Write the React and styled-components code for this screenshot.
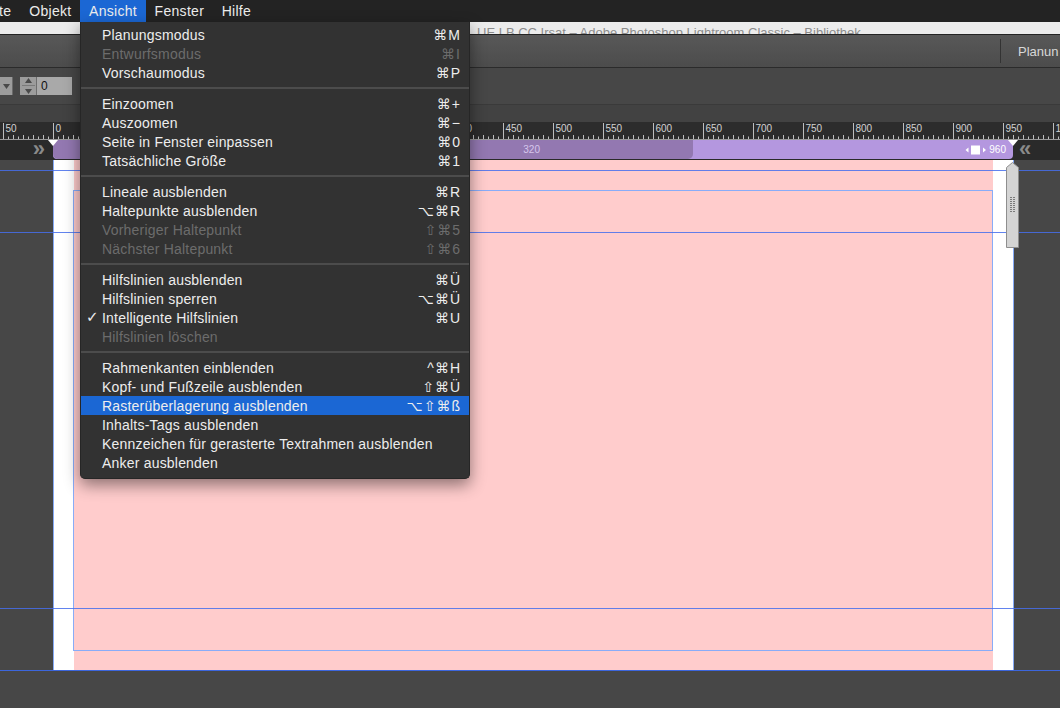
import styled, { createGlobalStyle } from 'styled-components';

const Global = createGlobalStyle`
  html, body { margin: 0; padding: 0; background: #474747; }
  body { font-family: "Liberation Sans", "DejaVu Sans", sans-serif; overflow: hidden; }
  * { box-sizing: border-box; }
`;

const menuGroups = [
  [
    { label: 'Planungsmodus', keys: '⌘M' },
    { label: 'Entwurfsmodus', keys: '⌘I', disabled: true },
    { label: 'Vorschaumodus', keys: '⌘P' },
  ],
  [
    { label: 'Einzoomen', keys: '⌘+' },
    { label: 'Auszoomen', keys: '⌘−' },
    { label: 'Seite in Fenster einpassen', keys: '⌘0' },
    { label: 'Tatsächliche Größe', keys: '⌘1' },
  ],
  [
    { label: 'Lineale ausblenden', keys: '⌘R' },
    { label: 'Haltepunkte ausblenden', keys: '⌥⌘R' },
    { label: 'Vorheriger Haltepunkt', keys: '⇧⌘5', disabled: true },
    { label: 'Nächster Haltepunkt', keys: '⇧⌘6', disabled: true },
  ],
  [
    { label: 'Hilfslinien ausblenden', keys: '⌘Ü' },
    { label: 'Hilfslinien sperren', keys: '⌥⌘Ü' },
    { label: 'Intelligente Hilfslinien', keys: '⌘U', checked: true },
    { label: 'Hilfslinien löschen', disabled: true },
  ],
  [
    { label: 'Rahmenkanten einblenden', keys: '^⌘H' },
    { label: 'Kopf- und Fußzeile ausblenden', keys: '⇧⌘Ü' },
    { label: 'Rasterüberlagerung ausblenden', keys: '⌥⇧⌘ß', active: true },
    { label: 'Inhalts-Tags ausblenden' },
    { label: 'Kennzeichen für gerasterte Textrahmen ausblenden' },
    { label: 'Anker ausblenden' },
  ],
];

const ORIGIN = 53.5;

function RulerScale() {
  const ticks = [];
  const labels = [];
  for (let u = -50; u <= 1010; u += 5) {
    const x = ORIGIN + u;
    if (u % 50 === 0) {
      ticks.push(<line key={'t' + u} x1={x} x2={x} y1={1} y2={17} stroke="#bdbdbd" strokeWidth="1" />);
      labels.push(
        <text key={'l' + u} x={x + 2} y={10} fill="#d2d2d2" fontSize="10" fontFamily="Liberation Sans, sans-serif">
          {Math.abs(u)}
        </text>
      );
    } else {
      const h = u % 10 === 0 ? 4 : 2.5;
      ticks.push(<line key={'t' + u} x1={x} x2={x} y1={17 - h} y2={17} stroke="#bdbdbd" strokeWidth="1" />);
    }
  }
  return (
    <svg width="1060" height="18" viewBox="0 0 1060 18">
      {ticks}
      {labels}
      <line x1="0" x2="1060" y1="17.5" y2="17.5" stroke="#9a9a9a" strokeWidth="1" />
    </svg>
  );
}

export default function App() {
  return (
    <Screen>
      <Global />
      <MenuBar>
        <MenuTitle $first>te</MenuTitle>
        <MenuTitle>Objekt</MenuTitle>
        <MenuTitle $open>Ansicht</MenuTitle>
        <MenuTitle>Fenster</MenuTitle>
        <MenuTitle>Hilfe</MenuTitle>
      </MenuBar>

      <TitleBar>
        <TitleText>UE LB CC Irsat – Adobe Photoshop Lightroom Classic – Bibliothek</TitleText>
      </TitleBar>

      <TopToolbar>
        <ToolbarDivider />
        <ModeLabel>Planun</ModeLabel>
      </TopToolbar>

      <ControlBar>
        <DropButton>
          <svg width="7" height="5" viewBox="0 0 7 5"><path d="M0 0h7L3.5 5z" fill="#4a4a4a" /></svg>
        </DropButton>
        <Spinner>
          <svg width="7" height="5" viewBox="0 0 7 5"><path d="M0 5h7L3.5 0z" fill="#4a4a4a" /></svg>
          <SpinLine />
          <svg width="7" height="5" viewBox="0 0 7 5"><path d="M0 0h7L3.5 5z" fill="#4a4a4a" /></svg>
        </Spinner>
        <NumberField>0</NumberField>
      </ControlBar>

      <SubStrip />

      <Ruler>
        <RulerScale />
      </Ruler>

      <BreakpointRow>
        <Chevron>»</Chevron>
        <Track>
          <NarrowBand>320</NarrowBand>
          <WideLabel>
            <svg width="22" height="10" viewBox="0 0 22 10">
              <path d="M3.5 2.5v5L0.5 5z" fill="#fff" />
              <rect x="6" y="0.5" width="9" height="9" fill="#fff" />
              <path d="M18 2.5v5L21 5z" fill="#fff" />
            </svg>
            960
          </WideLabel>
        </Track>
        <Chevron $right>«</Chevron>
        <Marker style={{ left: 48 }} />
        <Marker style={{ left: 1008 }} />
      </BreakpointRow>

      <Canvas>
        <Page>
          <PinkArea>
            <GridFrame />
          </PinkArea>
        </Page>
        <Guide $top={10} />
        <Guide $top={72} />
        <Guide $top={448} />
        <Guide $top={510} $strong />
        <ScrollHandle>
          <svg width="13" height="86" viewBox="0 0 13 86">
            <path d="M6.5 0.5L12.5 5.5V85.5H0.5V5.5Z" fill="#d4d4d4" stroke="#8e8e8e" strokeWidth="1" />
            {Array.from({ length: 8 }).map((_, i) => (
              <g key={i}>
                <rect x="4.5" y={35 + i * 2} width="1" height="1" fill="#222" />
                <rect x="7.5" y={35 + i * 2} width="1" height="1" fill="#222" />
              </g>
            ))}
          </svg>
        </ScrollHandle>
      </Canvas>

      <DropMenu>
        {menuGroups.map((group, gi) => (
          <div key={gi}>
            {gi > 0 && <Separator />}
            {group.map((item) => (
              <MenuItem key={item.label} $disabled={item.disabled} $active={item.active}>
                {item.checked && <Check>✓</Check>}
                <span>{item.label}</span>
                {item.keys && <Keys>{item.keys}</Keys>}
              </MenuItem>
            ))}
          </div>
        ))}
      </DropMenu>
    </Screen>
  );
}

const Screen = styled.div`
  position: relative;
  width: 1060px;
  height: 708px;
  overflow: hidden;
  display: flex;
  flex-direction: column;
  background: #474747;
`;

const MenuBar = styled.div`
  height: 22px;
  flex-shrink: 0;
  display: flex;
  align-items: stretch;
  background: #232323;
`;

const MenuTitle = styled.div`
  display: flex;
  align-items: center;
  padding: ${(p) => (p.$first ? '0 9px 0 0' : '0 8.5px 0 9px')};
  margin-left: ${(p) => (p.$first ? '-1px' : '0')};
  font-size: 14px;
  letter-spacing: 0.3px;
  color: #ececec;
  background: ${(p) => (p.$open ? '#1b67d4' : 'transparent')};
`;

const TitleBar = styled.div`
  height: 12px;
  flex-shrink: 0;
  overflow: hidden;
  background: #ececec;
  padding-left: 477px;
`;

const TitleText = styled.div`
  margin-top: 4px;
  font-size: 13px;
  line-height: 14px;
  color: #8c8c8c;
  white-space: nowrap;
`;

const TopToolbar = styled.div`
  height: 34px;
  flex-shrink: 0;
  display: flex;
  align-items: center;
  justify-content: flex-end;
  gap: 17px;
  background: linear-gradient(#585858, #4c4c4c);
  border-top: 1px solid #242424;
  border-bottom: 1px solid #2b2b2b;
`;

const ToolbarDivider = styled.div`
  width: 1px;
  height: 24px;
  background: #333;
`;

const ModeLabel = styled.div`
  width: 42px;
  overflow: hidden;
  white-space: nowrap;
  font-size: 13px;
  color: #d8d8d8;
`;

const ControlBar = styled.div`
  height: 36px;
  flex-shrink: 0;
  display: flex;
  align-items: flex-start;
  padding-top: 9px;
  background: #474747;
`;

const DropButton = styled.div`
  width: 13px;
  height: 18px;
  background: #9c9c9c;
  border-right: 1px solid #6a6a6a;
  display: flex;
  align-items: center;
  justify-content: center;
  margin-right: 7px;
`;

const Spinner = styled.div`
  width: 17px;
  height: 18px;
  background: #9c9c9c;
  display: flex;
  flex-direction: column;
  align-items: center;
  justify-content: space-around;
  border-right: 1px solid #6e6e6e;
`;

const SpinLine = styled.div`
  width: 13px;
  height: 1px;
  background: #7a7a7a;
`;

const NumberField = styled.div`
  width: 35px;
  height: 18px;
  background: #a9a9a9;
  padding-left: 4px;
  font-size: 12px;
  line-height: 18px;
  color: #111;
`;

const SubStrip = styled.div`
  height: 18px;
  flex-shrink: 0;
  background: #424242;
  border-top: 1px solid #3a3a3a;
`;

const Ruler = styled.div`
  height: 18px;
  flex-shrink: 0;
  background: #2c2c2c;
  svg { display: block; }
`;

const BreakpointRow = styled.div`
  position: relative;
  height: 20px;
  flex-shrink: 0;
  display: flex;
  background: #2a2a2a;
`;

const Chevron = styled.div`
  width: ${(p) => (p.$right ? '47px' : '53px')};
  display: flex;
  align-items: center;
  justify-content: ${(p) => (p.$right ? 'flex-start' : 'flex-end')};
  padding: ${(p) => (p.$right ? '0 0 0 6px' : '0 8px 0 0')};
  font-size: 22px;
  font-weight: bold;
  color: #8a8a8a;
  line-height: 1;
  margin-top: -2px;
`;

const Track = styled.div`
  width: 960px;
  height: 19px;
  display: flex;
  align-items: stretch;
  justify-content: space-between;
  background: #b497df;
  border-radius: 0 0 4px 4px;
`;

const NarrowBand = styled.div`
  width: 640px;
  display: flex;
  align-items: center;
  justify-content: flex-end;
  padding-right: 153px;
  background: #9378b1;
  border-radius: 0 0 5px 5px;
  font-size: 10px;
  color: #d6c6ec;
`;

const WideLabel = styled.div`
  display: flex;
  align-items: center;
  gap: 2px;
  padding-right: 7px;
  font-size: 10px;
  color: #fff;
  svg { display: block; }
`;

const Marker = styled.div`
  position: absolute;
  top: 0;
  width: 0;
  height: 0;
  border-left: 5.5px solid transparent;
  border-right: 5.5px solid transparent;
  border-top: 6px solid #fff;
`;

const Canvas = styled.div`
  position: relative;
  flex: 1;
  background: #474747;
`;

const Page = styled.div`
  margin-left: 53px;
  width: 961px;
  height: 510px;
  padding: 0 20px;
  background: #fff;
  border-left: 1px solid #86aaf6;
  border-right: 1px solid #86aaf6;
`;

const PinkArea = styled.div`
  height: 100%;
  display: flex;
  flex-direction: column;
  padding: 30px 0 19px;
  background: #ffcccc;
`;

const GridFrame = styled.div`
  flex: 1;
  border: 1px solid #88acf8;
  margin-left: -1px;
`;

const Guide = styled.div`
  position: absolute;
  left: 0;
  right: 0;
  top: ${(p) => p.$top}px;
  height: 1px;
  background: ${(p) => (p.$strong ? '#3c66dc' : 'rgba(70, 110, 236, 0.85)')};
`;

const ScrollHandle = styled.div`
  position: absolute;
  left: 1006px;
  top: 2px;
  svg { display: block; }
`;

const DropMenu = styled.div`
  position: absolute;
  left: 80px;
  top: 22px;
  width: 390px;
  padding: 3px 0 6px;
  background: #323232;
  border-radius: 0 0 5px 5px;
  border: 1px solid #262626;
  border-top: none;
  box-shadow: 0 6px 16px rgba(0, 0, 0, 0.45);
`;

const Separator = styled.div`
  height: 2px;
  margin: 5px 0;
  background: #4c4c4c;
`;

const MenuItem = styled.div`
  position: relative;
  height: 19px;
  display: flex;
  align-items: center;
  justify-content: space-between;
  padding: 0 8px 0 21px;
  font-size: 14px;
  letter-spacing: 0.2px;
  color: ${(p) => (p.$disabled ? '#6c6c6c' : '#ededed')};
  background: ${(p) => (p.$active ? '#1b67d4' : 'transparent')};
  white-space: nowrap;
`;

const Check = styled.span`
  position: absolute;
  left: 5px;
  top: 0;
  font-family: "DejaVu Sans", sans-serif;
  font-size: 15px;
  font-weight: bold;
`;

const Keys = styled.span`
  font-family: "Liberation Sans", "DejaVu Sans", sans-serif;
  letter-spacing: 1px;
`;
